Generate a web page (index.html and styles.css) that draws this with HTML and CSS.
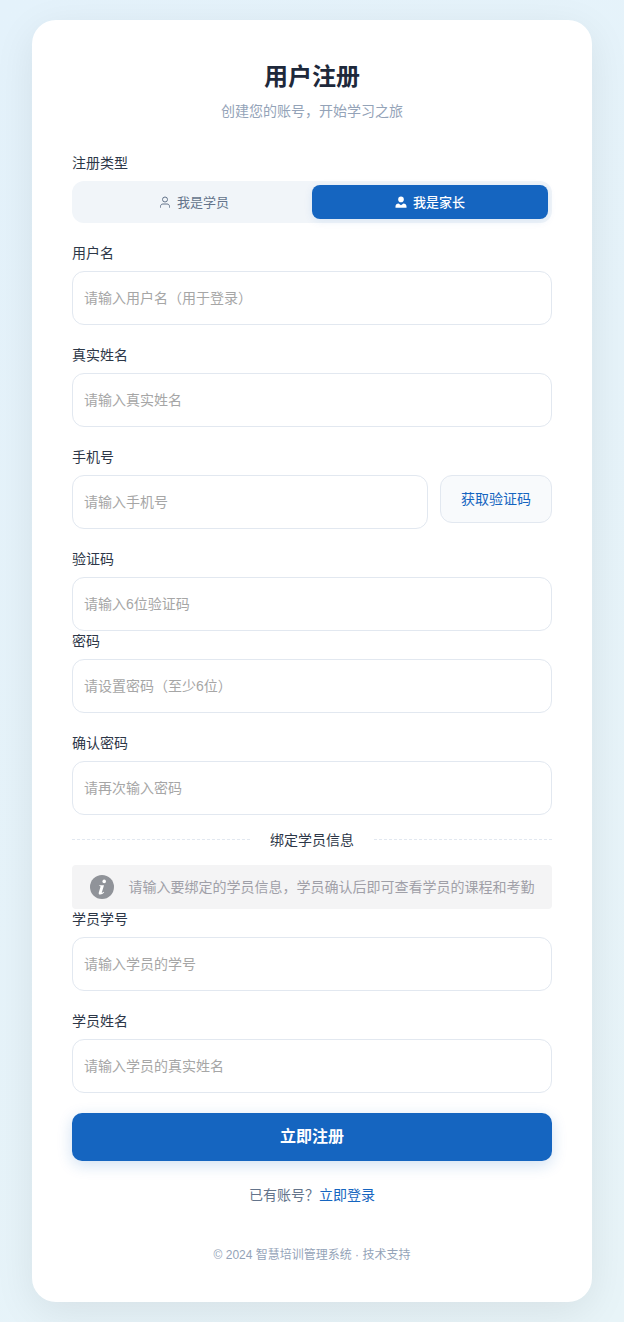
FILE: index.html
```html
<!DOCTYPE html>
<html lang="zh-CN">
<head>
  <meta charset="UTF-8" />
  <meta name="viewport" content="width=device-width, initial-scale=1.0"/>
  <title>用户注册</title>
  <link rel="stylesheet" href="styles.css">
</head>
<body>
  <main class="card">
    <h1 class="title">用户注册</h1>
    <p class="subtitle">创建您的账号，开始学习之旅</p>

    <div class="group">
      <label class="label">注册类型</label>
      <div class="toggle">
        <button class="toggle-btn" type="button">
          <svg class="toggle-icon" viewBox="0 0 12 12" fill="none" stroke="currentColor" stroke-width="1">
            <circle cx="6" cy="3.5" r="2.5"/>
            <path d="M1.5 11.6V10.4C1.5 9 2.5 8 3.9 8H8.1C9.5 8 10.5 9 10.5 10.4V11.6"/>
          </svg>
          <span>我是学员</span>
        </button>
        <button class="toggle-btn active" type="button">
          <svg class="toggle-icon" viewBox="0 0 12 12" fill="currentColor">
            <circle cx="6" cy="3.4" r="2.8"/>
            <path d="M0.5 11.8V10.2C0.5 8.6 1.8 7.4 3.6 7.4L6 9.2L8.4 7.4C10.2 7.4 11.5 8.6 11.5 10.2V11.8Z"/>
          </svg>
          <span>我是家长</span>
        </button>
      </div>
    </div>

    <div class="group">
      <label class="label">用户名</label>
      <input class="input" type="text" placeholder="请输入用户名（用于登录）">
    </div>

    <div class="group">
      <label class="label">真实姓名</label>
      <input class="input" type="text" placeholder="请输入真实姓名">
    </div>

    <div class="group">
      <label class="label">手机号</label>
      <div class="phone-row">
        <input class="input" type="text" placeholder="请输入手机号">
        <button class="code-btn" type="button">获取验证码</button>
      </div>
    </div>

    <div class="group flush">
      <label class="label">验证码</label>
      <input class="input" type="text" placeholder="请输入6位验证码">
    </div>

    <div class="group">
      <label class="label">密码</label>
      <input class="input" type="password" placeholder="请设置密码（至少6位）">
    </div>

    <div class="group flush">
      <label class="label">确认密码</label>
      <input class="input" type="password" placeholder="请再次输入密码">
    </div>

    <div class="divider"><span>绑定学员信息</span></div>

    <div class="notice">
      <svg class="notice-icon" viewBox="0 0 24 24">
        <circle cx="12" cy="12" r="12" fill="#909399"/>
        <circle cx="14.2" cy="6.4" r="1.8" fill="#fff"/>
        <path d="M9.4 10.2H14L11.8 17.4C11.6 18.1 12.3 18 13.7 16.8L14.2 17.3C12.9 18.9 11.4 19.6 10 19.5C8.8 19.4 8.5 18.5 8.8 17.4L10.5 11.8C10.6 11.2 10.2 11 9.2 10.9Z" fill="#fff"/>
      </svg>
      <span>请输入要绑定的学员信息，学员确认后即可查看学员的课程和考勤</span>
    </div>

    <div class="group">
      <label class="label">学员学号</label>
      <input class="input" type="text" placeholder="请输入学员的学号">
    </div>

    <div class="group">
      <label class="label">学员姓名</label>
      <input class="input" type="text" placeholder="请输入学员的真实姓名">
    </div>

    <button class="submit" type="button">立即注册</button>

    <p class="login-link">已有账号？<a href="#">立即登录</a></p>
    <p class="copyright">© 2024 智慧培训管理系统 · 技术支持</p>
  </main>
</body>
</html>
```

FILE: styles.css
```css
* { box-sizing: border-box; margin: 0; padding: 0; }

body {
  font-family: "Liberation Sans", "Noto Sans CJK SC", sans-serif;
  background: linear-gradient(135deg, #e4f2fb 0%, #e8f4f8 100%);
  color: #2c3e50;
  padding: 20px 32px;
  min-height: 100vh;
}

.card {
  background-color: #fff;
  border-radius: 24px;
  padding: 40px 40px 38px;
  box-shadow: 0 10px 40px rgba(0, 0, 0, 0.08);
}

.title {
  font-size: 24px;
  line-height: 34px;
  font-weight: 700;
  color: #1e293b;
  text-align: center;
}

.subtitle {
  font-size: 14px;
  line-height: 20px;
  margin-top: 7px;
  margin-bottom: 32px;
  color: #94a3b8;
  text-align: center;
}

.group {
  margin-bottom: 20px;
}

.group.flush {
  margin-bottom: 0;
}

.label {
  display: block;
  font-size: 14px;
  line-height: 20px;
  margin-bottom: 8px;
  color: #2d3748;
}

.toggle {
  display: flex;
  height: 42px;
  padding: 4px;
  background-color: #f1f5f9;
  border-radius: 12px;
}

.toggle-btn {
  flex: 1;
  display: flex;
  justify-content: center;
  align-items: center;
  gap: 6px;
  border: none;
  border-radius: 8px;
  background: transparent;
  font-family: inherit;
  font-size: 13px;
  color: #64748b;
}

.toggle-btn span {
  margin-bottom: 2px;
}

.toggle-btn.active {
  background-color: #1565c0;
  color: #fff;
  font-weight: 500;
  box-shadow: 0 2px 8px rgba(21, 101, 192, 0.1);
}

.toggle-icon {
  width: 12px;
  height: 12px;
}

.input {
  display: block;
  width: 100%;
  height: 54px;
  padding: 0 11px;
  border: 1px solid #e2e8f0;
  border-radius: 12px;
  background-color: #fff;
  font-family: inherit;
  font-size: 14px;
  color: #334155;
}

.input::placeholder {
  color: #a6a6a6;
  opacity: 1;
}

.phone-row {
  display: flex;
  align-items: flex-start;
  gap: 12px;
}

.phone-row .input {
  flex: 1;
  min-width: 0;
}

.code-btn {
  width: 112px;
  height: 48px;
  padding-bottom: 2px;
  border: 1px solid #e2e8f0;
  border-radius: 12px;
  background-color: #f8fafc;
  font-family: inherit;
  font-size: 14px;
  color: #1565c0;
}

.divider {
  display: flex;
  align-items: center;
  gap: 20px;
  height: 20px;
  margin: 14px 0 16px;
  font-size: 14px;
  color: #2d3748;
}

.divider::before,
.divider::after {
  content: "";
  flex: 1;
  border-top: 1px dashed #e2e8f0;
}

.notice {
  display: flex;
  justify-content: center;
  align-items: center;
  gap: 15px;
  height: 44px;
  background-color: #f4f4f5;
  border-radius: 4px;
  font-size: 14px;
  color: #a0a0a8;
}

.notice span {
  margin-bottom: 2px;
}

.notice-icon {
  width: 24px;
  height: 24px;
  flex-shrink: 0;
}

.submit {
  display: block;
  width: 100%;
  height: 48px;
  padding-bottom: 4px;
  border: none;
  border-radius: 10px;
  background-color: #1565c0;
  color: #fff;
  font-family: inherit;
  font-size: 16px;
  font-weight: 700;
  box-shadow: 0 4px 15px rgba(21, 101, 192, 0.2);
}

.login-link {
  margin-top: 24px;
  font-size: 14px;
  line-height: 20px;
  color: #64748b;
  text-align: center;
}

.login-link a {
  color: #1565c0;
  text-decoration: none;
}

.copyright {
  margin-top: 42px;
  font-size: 12px;
  line-height: 17px;
  color: #94a3b8;
  text-align: center;
}
```
